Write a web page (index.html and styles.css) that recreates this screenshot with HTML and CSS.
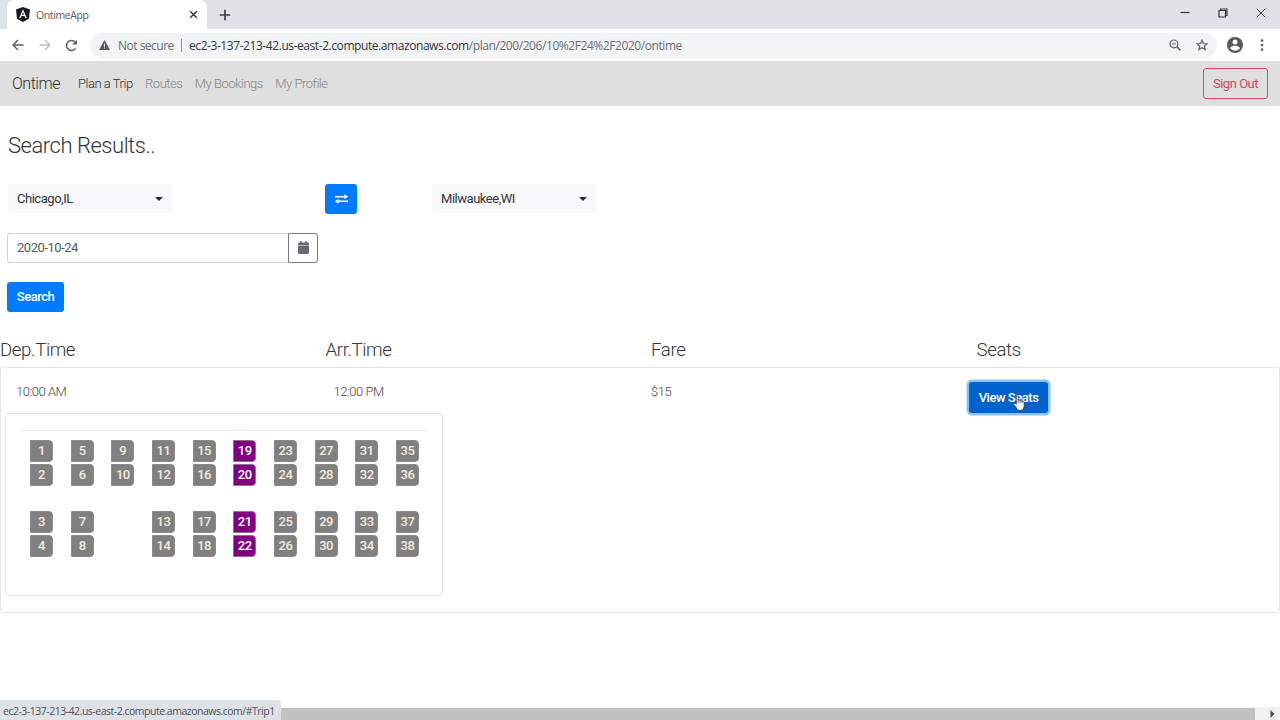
FILE: index.html
```html
<!DOCTYPE html>
<html lang="en">
<head>
<meta charset="utf-8">
<title>OntimeApp</title>
<link rel="stylesheet" href="styles.css">
</head>
<body>
<div class="window">
  <header class="tabstrip">
    <div class="tab">
      <svg class="favicon" width="14" height="15" viewBox="0 0 14 15"><path d="M7 0 14 2.5 13 11.8 7 15 1 11.8 0 2.5Z" fill="#161a22"/><path d="M7 2.2 10.8 11H9.3L8.5 9H5.5L4.7 11H3.2ZM7 5.1 6 7.7h2Z" fill="#fff"/></svg>
      <span class="tab-title">OntimeApp</span>
      <svg class="tab-close" width="9" height="9" viewBox="0 0 9 9"><path d="M1.2 1.2 7.8 7.8M7.8 1.2 1.2 7.8" stroke="#35383c" stroke-width="1.5"/></svg>
    </div>
    <svg class="tab-add" width="12" height="12" viewBox="0 0 12 12"><path d="M6 .8V11.2M.8 6H11.2" stroke="#3f4247" stroke-width="1.7"/></svg>
    <div class="window-controls">
      <svg width="10" height="10" viewBox="0 0 10 10"><path d="M.5 4.5H9.5" stroke="#33363a" stroke-width="1.2"/></svg>
      <svg width="10" height="10" viewBox="0 0 10 10" fill="none" stroke="#33363a"><path d="M1 2.5H7.5V9H1ZM2.5 2.5V1H9V7.5H7.5" stroke-width="1.2"/></svg>
      <svg width="10" height="10" viewBox="0 0 10 10"><path d="M.7.7 9.3 9.3M9.3.7.7 9.3" stroke="#33363a" stroke-width="1"/></svg>
    </div>
  </header>
  <div class="toolbar">
    <svg class="nav-icon" width="12" height="12" viewBox="0 0 12 12" fill="none" stroke="#5a5d61" stroke-width="1.4"><path d="M11.5 6H1.4M6 1.1 1.1 6 6 10.9"/></svg>
    <svg class="nav-icon" width="12" height="12" viewBox="0 0 12 12" fill="none" stroke="#bcbec1" stroke-width="1.4"><path d="M.5 6H10.6M6 1.1 10.9 6 6 10.9"/></svg>
    <svg class="nav-icon" width="13" height="13" viewBox="0 0 13 13"><path d="M10.6 9.4A5 5 0 1 1 10.2 3.1" fill="none" stroke="#5a5d61" stroke-width="1.5"/><path d="M12 .8V5.6H7.2Z" fill="#5a5d61"/></svg>
    <div class="omnibox">
      <svg width="11" height="10" viewBox="0 0 11 10"><path d="M5.5 0 11 10H0Z" fill="#56595d"/><path d="M5.5 3.6V6.6M5.5 7.4V8.6" stroke="#f1f3f4" stroke-width="1"/></svg>
      <span class="security">Not secure</span>
      <span class="divider"></span>
      <span class="url"><span class="host">ec2-3-137-213-42.us-east-2.compute.amazonaws.com</span>/plan/200/206/10%2F24%2F2020/ontime</span>
      <div class="omnibox-actions">
        <svg width="12" height="12" viewBox="0 0 12 12" fill="none" stroke="#5a5d61"><circle cx="4.9" cy="4.9" r="3.9" stroke-width="1.2"/><path d="M7.8 7.8 11.3 11.3" stroke-width="1.6"/><path d="M3 4.9H6.8" stroke-width="1"/></svg>
        <svg width="12" height="12" viewBox="0 0 12 12"><path d="M6 1.2 7.4 4.5 11 4.8 8.3 7.1 9.1 10.6 6 8.8 2.9 10.6 3.7 7.1 1 4.8 4.6 4.5Z" fill="none" stroke="#5a5d61" stroke-width="1.2"/></svg>
      </div>
    </div>
    <svg class="avatar" width="16" height="16" viewBox="0 0 16 16"><circle cx="8" cy="8" r="8" fill="#55585d"/><circle cx="8" cy="5" r="2.5" fill="#fff"/><path d="M3 11C4 9.2 6 8.7 8 8.7s4 .5 5 2.3C12 12.800 10 13.800 8 13.800S4 12.800 3 11Z" fill="#fff"/></svg>
    <svg class="menu" width="4" height="12" viewBox="0 0 4 12" fill="#55585d"><circle cx="2" cy="1.500" r="1.300"/><circle cx="2" cy="6" r="1.300"/><circle cx="2" cy="10.500" r="1.300"/></svg>
  </div>

  <nav class="navbar">
    <span class="brand">Ontime</span>
    <span class="nav-link active">Plan a Trip</span>
    <span class="nav-link">Routes</span>
    <span class="nav-link">My Bookings</span>
    <span class="nav-link">My Profile</span>
    <button class="btn btn-signout">Sign Out</button>
  </nav>

  <main class="page">
    <section class="search">
      <h1 class="title">Search Results..</h1>
      <div class="route">
        <div class="select"><span>Chicago,IL</span><i class="caret"></i></div>
        <button class="btn btn-primary btn-swap">
          <svg width="13" height="10" viewBox="0 0 13 10" fill="#fff"><path d="M0 2H9.500V0L13 2.800 9.500 5.300V3.500H0ZM13 6.500H3.500V4.700L0 7.300 3.500 10V8H13Z"/></svg>
        </button>
        <div class="select"><span>Milwaukee,WI</span><i class="caret"></i></div>
      </div>
      <div class="date">
        <div class="date-input">2020-10-24</div>
        <button class="btn-calendar">
          <svg width="11" height="13" viewBox="0 0 11 13" fill="#666a6e"><path d="M0 4.600H11V11.800Q11 13 9.800 13H1.200Q0 13 0 11.800ZM0 3.900V2.800Q0 1.600 1.200 1.600H2V.2H3.800V1.600H7.200V.2H9V1.600H9.800Q11 1.600 11 2.800V3.900Z"/></svg>
        </button>
      </div>
      <button class="btn btn-primary btn-search">Search</button>
    </section>

    <div class="columns">
      <span>Dep.Time</span><span>Arr.Time</span><span>Fare</span><span>Seats</span>
    </div>

    <section class="trip">
      <div class="trip-row">
        <span>10:00 AM</span><span>12:00 PM</span><span>$15</span>
        <div class="view-cell">
          <button class="btn btn-view">View Seats</button>
          <svg class="pointer" width="12" height="17" viewBox="0 0 12 17"><path d="M3.300 1.800Q3.300.6 4.200.6T5.100 1.800V6.200Q6.400 5.400 7 6.600 8.200 6 8.900 7.200 10.800 6.600 11.200 8.400V11.500Q11.200 14 9.600 16.200H4.500Q3.500 13.500 1 11 0 9.500 1 9 2.200 8.800 3.300 10.200Z" fill="#fff" stroke="#26344c" stroke-width=".8"/><path d="M5.200 6.500V9M7.100 7V9M9 7.500V9.300" stroke="#26344c" stroke-width=".7"/></svg>
        </div>
      </div>
      <div class="seat-map">
        <div class="seat-grid">
          <div class="seat-row"><b class="seat">1</b><b class="seat">5</b><b class="seat">9</b><b class="seat">11</b><b class="seat">15</b><b class="seat booked">19</b><b class="seat">23</b><b class="seat">27</b><b class="seat">31</b><b class="seat">35</b></div>
          <div class="seat-row"><b class="seat">2</b><b class="seat">6</b><b class="seat">10</b><b class="seat">12</b><b class="seat">16</b><b class="seat booked">20</b><b class="seat">24</b><b class="seat">28</b><b class="seat">32</b><b class="seat">36</b></div>
          <div class="seat-row aisle"><b class="seat">3</b><b class="seat">7</b><i></i><b class="seat">13</b><b class="seat">17</b><b class="seat booked">21</b><b class="seat">25</b><b class="seat">29</b><b class="seat">33</b><b class="seat">37</b></div>
          <div class="seat-row"><b class="seat">4</b><b class="seat">8</b><i></i><b class="seat">14</b><b class="seat">18</b><b class="seat booked">22</b><b class="seat">26</b><b class="seat">30</b><b class="seat">34</b><b class="seat">38</b></div>
        </div>
      </div>
    </section>
  </main>

  <footer class="scrollbar">
    <div class="thumb"></div>
    <svg width="5" height="8" viewBox="0 0 5 8"><path d="M.5 0 4.500 4 .5 8Z" fill="#4b4b4b"/></svg>
    <div class="status">ec2-3-137-213-42.us-east-2.compute.amazonaws.com/#Trip1</div>
  </footer>
</div>
</body>
</html>
```
FILE: styles.css
```css
* { box-sizing: border-box; }
body { margin: 0; background: #fff; color: #3f4347; font-family: Roboto, sans-serif; font-size: 13px; letter-spacing: -.47px; }
svg { display: block; flex: none; }
button { margin: 0; font-family: inherit; letter-spacing: inherit; }
.window { width: 1280px; height: 720px; display: flex; flex-direction: column; overflow: hidden; }

.tabstrip { height: 29px; flex: none; display: flex; background: #dee1e6; font-family: "Open Sans", "Noto Sans", sans-serif; padding-left: 7px; }
.tab { width: 200px; height: 29px; display: flex; align-items: center; background: #fff; border-radius: 7px 7px 0 0; padding: 0 9px; }
.tab-title { margin-left: 6px; font-size: 10.5px; letter-spacing: -.4px; color: #55585c; }
.tab-close { margin-left: auto; }
.tab-add { margin: 9px 0 0 12px; }
.window-controls { margin-left: auto; padding: 8px 14px 0 0; display: flex; gap: 28px; }

.toolbar { height: 32px; flex: none; display: flex; align-items: center; background: #fff; padding: 0 16px 0 12px; font-family: "Open Sans", "Noto Sans", sans-serif; }
.nav-icon { margin-right: 15px; }
.nav-icon + .nav-icon + .nav-icon { margin-left: -1px; }
.omnibox { width: 1127px; height: 25px; margin-left: -3px; border-radius: 13px; background: #f1f3f4; display: flex; align-items: center; padding: 0 9px 0 9px; font-size: 12px; color: #6b6e72; }
.security { margin-left: 8px; width: 56px; white-space: nowrap; letter-spacing: -.5px; }
.divider { width: 1px; height: 13px; margin: 0 7px 0 7px; background: #8e9195; }
.url { white-space: nowrap; letter-spacing: -.43px; }
.host { color: #303337; }
.omnibox-actions { margin-left: auto; display: flex; gap: 15px; }
.avatar { margin-left: 10px; }
.menu { margin-left: auto; }

.navbar { height: 45px; flex: none; display: flex; align-items: center; background: #dfdfdf; padding: 0 12px; font-weight: 300; font-size: 13px; }
.brand { width: 66px; font-size: 16px; color: #303030; }
.nav-link { margin-right: 12.3px; color: #858585; }
.nav-link.active { color: #303030; }
.btn { border: 0; border-radius: 3px; font-size: 13px; line-height: 19px; padding: 5px 10px; color: #fff; white-space: nowrap; }
.btn-signout { width: 65px; height: 31px; margin-left: auto; padding: 0; border: 1px solid #dc4c5c; background: transparent; color: #d94656; }
.btn-primary { background: #007bff; }

.page { flex: 1; }
.search { height: 233px; padding: 25px 7px 0; }
.title { height: 30px; margin: 0; padding-left: 1px; font-size: 22px; line-height: 30px; font-weight: 300; color: #303438; }
.route { margin-top: 23px; display: flex; }
.select { width: 165px; height: 29px; margin-left: 1px; padding: 0 10px 0 9px; border-radius: 3px; background: #f8f9fa; display: flex; align-items: center; justify-content: space-between; color: #303438; }
.caret { border: 4px solid transparent; border-top-color: #212529; border-bottom: 0; }
.btn-swap { width: 32px; height: 30px; margin: 0 74px 0 152px; padding: 0 0 1px; display: flex; align-items: center; justify-content: center; }
.date { width: 311px; height: 30px; margin-top: 19px; display: flex; }
.date-input { flex: 1; border: 1px solid #ced4da; border-right: 0; border-radius: 3px 0 0 3px; padding: 0 9px; line-height: 27px; color: #56595d; }
.btn-calendar { width: 30px; border: 1px solid #75797d; border-radius: 0 3px 3px 0; background: #fff; padding: 0 0 2px; display: flex; align-items: center; justify-content: center; }
.btn-search { width: 57px; height: 30px; margin-top: 19px; padding: 0 0 2px; font-weight: 500; }

.columns { height: 28px; display: grid; grid-template-columns: 325.5px 325.5px 325.5px 1fr; font-size: 18.7px; line-height: 22px; font-weight: 300; letter-spacing: -.4px; color: #303438; }
.trip { height: 246px; border: 1px solid #e4e4e4; border-radius: 3px; padding: 14px 4px 0; }
.trip-row { height: 31px; padding-left: 11px; display: grid; grid-template-columns: 317.5px 317.5px 317.5px 1fr; font-weight: 300; line-height: 20px; color: #44484b; }
.view-cell { position: relative; }
.btn-view { width: 79px; height: 31px; margin-left: .5px; padding: 0; background: #0062cc; font-weight: 500; box-shadow: 0 0 0 2.5px #8bc1fc; display: block; }
.pointer { position: absolute; left: 44px; top: 12px; }
.seat-map { width: 438px; height: 183px; border: 1px solid #e4e4e4; border-radius: 3px; padding: 16px 14px 0; }
.seat-grid { border-top: 1px solid #e9e9e9; padding: 9px 10px 0; }
.seat-row { display: grid; grid-template-columns: repeat(10, 23px); column-gap: 17.670px; height: 22px; margin-bottom: 2px; }
.seat-row.aisle { margin-top: 25px; }
.seat { border: 1px solid #8b8b8b; border-radius: 0 4px 4px 0; background: #808080; color: #f4ebdd; font-weight: 500; font-size: 13px; line-height: 20px; text-align: center; }
.seat.booked { border: 1.500px solid #8d7190; background: #800080; color: #fff; }

.scrollbar { position: relative; height: 13px; flex: none; background: #f1f1f1; display: flex; align-items: center; }
.thumb { width: 1255px; height: 12px; margin-right: 15px; background: #c1c1c1; }
.status { position: absolute; left: 0; bottom: 0; width: 281px; height: 20px; padding-left: 3px; border-radius: 0 3px 0 0; background: #dee1e6; color: #505357; font-family: "Open Sans", "Noto Sans", sans-serif; font-size: 10.500px; letter-spacing: -.49px; line-height: 22px; white-space: nowrap; }
```
